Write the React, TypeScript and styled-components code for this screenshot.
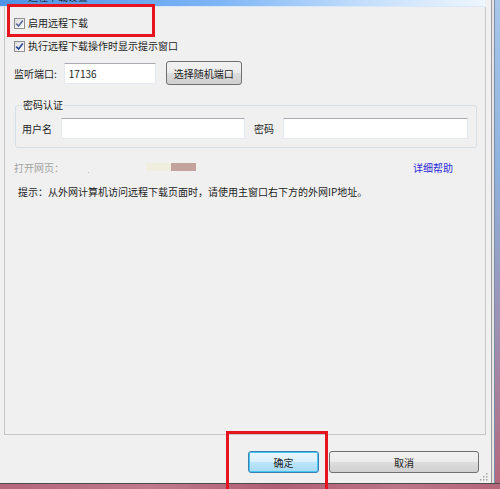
import React from 'react';
import styled, {createGlobalStyle, css} from 'styled-components';

const GlobalStyle = createGlobalStyle`
    html, body {
        margin: 0;
        padding: 0;
        background: #f0f0f0;
    }
    body {
        font-family: "Noto Sans CJK SC", "Noto Sans", sans-serif;
        font-size: 10px;
        color: #1e1e1e;
    }
`;

const Check = ({color}: {color: string}) => (
    <CheckBox>
        <svg width="9" height="9" viewBox="0 0 9 9">
            <path d="M1.2 4.6 L3.6 7 L7.8 1.6" fill="none" stroke={color} strokeWidth="1.7"/>
        </svg>
    </CheckBox>
);

export default function App() {
    return (
        <>
            <GlobalStyle/>
            <Screen>
                <Client>
                    <TitleStrip>
                        <TitleText>远程下载设置</TitleText>
                    </TitleStrip>
                    <Panel>
                        <CheckRow>
                            <Check color={"#5b6d99"}/>
                            <span>启用远程下载</span>
                        </CheckRow>
                        <CheckRow $gap={9}>
                            <Check color={"#2c4a9a"}/>
                            <span>执行远程下载操作时显示提示窗口</span>
                        </CheckRow>
                        <PortRow>
                            <span>监听端口:</span>
                            <TextInput $w={92} $ml={7} defaultValue={"17136"}/>
                            <SmallButton>选择随机端口</SmallButton>
                        </PortRow>
                        <Group>
                            <Legend>密码认证</Legend>
                            <AuthRow>
                                <span>用户名</span>
                                <TextInput $w={184} $ml={9}/>
                                <AuthLabel>密码</AuthLabel>
                                <TextInput $w={185} $ml={9} type={"password"}/>
                            </AuthRow>
                        </Group>
                        <OpenRow>
                            <Muted>打开网页：</Muted>
                            <Dot/>
                            <Patch $c={"#efeedf"} $ml={57}/>
                            <Patch $c={"#c3a39b"}/>
                            <HelpLink>详细帮助</HelpLink>
                        </OpenRow>
                        <Hint>提示：从外网计算机访问远程下载页面时，请使用主窗口右下方的外网IP地址。</Hint>
                    </Panel>
                    <ButtonRow>
                        <DialogButton $w={71} $primary>确定</DialogButton>
                        <DialogButton $w={150}>取消</DialogButton>
                    </ButtonRow>
                    <Grip>
                        <svg width="8" height="8" viewBox="0 0 8 8">
                            <rect x="6" y="0" width="1.5" height="1.5" fill="#a8a8a8"/>
                            <rect x="3" y="3" width="1.5" height="1.5" fill="#a8a8a8"/>
                            <rect x="6" y="3" width="1.5" height="1.5" fill="#a8a8a8"/>
                            <rect x="0" y="6" width="1.5" height="1.5" fill="#a8a8a8"/>
                            <rect x="3" y="6" width="1.5" height="1.5" fill="#a8a8a8"/>
                            <rect x="6" y="6" width="1.5" height="1.5" fill="#a8a8a8"/>
                        </svg>
                    </Grip>
                </Client>
                <RightFrame/>
                <BottomFrame/>
                <Marker $x={7} $y={4} $w={148} $h={33}/>
                <Marker $x={226} $y={431} $w={102} $h={64}/>
            </Screen>
        </>
    );
}

const Screen = styled.div`
    position: relative;
    width: 500px;
    height: 489px;
    overflow: hidden;
    display: grid;
    grid-template-columns: 491px 9px;
    grid-template-rows: 483px 6px;
    background: #f0f0f0;
`;

const Client = styled.div`
    position: relative;
    display: flex;
    flex-direction: column;
    min-height: 0;
`;

const TitleStrip = styled.div`
    height: 7px;
    margin-right: 6px;
    flex-shrink: 0;
    box-sizing: border-box;
    padding-left: 28px;
    overflow: hidden;
    background: linear-gradient(to right, #4f93e6 0%, #7eb5f6 45%, #c3defb 75%, #eef6ff 100%);
    border-bottom: 1px solid #d9e8f8;
`;

const TitleText = styled.span`
    display: block;
    margin-top: -9px;
    line-height: 12px;
    color: #2a2f3a;
`;

const Panel = styled.div`
    margin-left: 4px;
    width: 482px;
    height: 428px;
    flex-shrink: 0;
    box-sizing: border-box;
    border: 1px solid #c6c6c6;
    border-top: none;
    padding: 9px 8px 0 9px;
    display: flex;
    flex-direction: column;
`;

const CheckRow = styled.div<{$gap?: number}>`
    display: flex;
    align-items: center;
    gap: 3px;
    height: 14px;
    line-height: 14px;
    margin-top: ${p => p.$gap ?? 0}px;
`;

const CheckBox = styled.span`
    width: 11px;
    height: 11px;
    box-sizing: border-box;
    border: 1px solid #8e8f8f;
    background: linear-gradient(135deg, #dcdcdc, #ffffff);
    display: flex;
    align-items: center;
    justify-content: center;
    flex-shrink: 0;
`;

const PortRow = styled.div`
    display: flex;
    align-items: center;
    height: 24px;
    margin-top: 8px;
`;

const TextInput = styled.input<{$w: number; $ml: number}>`
    width: ${p => p.$w}px;
    height: 21px;
    margin: 0 0 0 ${p => p.$ml}px;
    box-sizing: border-box;
    padding: 0 4px;
    border: 1px solid #e3e9ef;
    border-top-color: #abadb3;
    background: #ffffff;
    font: inherit;
    font-size: 10px;
    color: #1e1e1e;
    outline: none;
`;

const winButton = css`
    box-sizing: border-box;
    height: 22px;
    border-radius: 3px;
    font: inherit;
    font-size: 10px;
    color: #1e1e1e;
    padding: 0;
    cursor: default;
`;

const SmallButton = styled.button`
    ${winButton};
    width: 76px;
    height: 24px;
    margin-left: 10px;
    border: 1px solid #707070;
    background: linear-gradient(to bottom, #f2f2f2 0%, #ebebeb 50%, #dddddd 51%, #cfcfcf 100%);
`;

const Group = styled.fieldset`
    margin: 13px 0 0 1px;
    padding: 0 8px 8px 6px;
    border: 1px solid #d5dfe5;
    border-radius: 3px;
`;

const Legend = styled.legend`
    padding: 0 1px;
    line-height: 14px;
`;

const AuthRow = styled.div`
    display: flex;
    align-items: center;
    height: 21px;
    margin-top: 6px;
`;

const AuthLabel = styled.span`
    margin-left: 9px;
`;

const OpenRow = styled.div`
    display: flex;
    align-items: center;
    height: 14px;
    line-height: 14px;
    margin-top: 13px;
`;

const Muted = styled.span`
    color: #a4a4a4;
`;

const Dot = styled.span`
    width: 1px;
    height: 1px;
    margin: 8px 0 0 24px;
    background: #c4c4c4;
`;

const Patch = styled.span<{$c: string; $ml?: number}>`
    width: 25px;
    height: 8px;
    margin: -2px 0 0 ${p => p.$ml ?? 0}px;
    background: ${p => p.$c};
`;

const HelpLink = styled.span`
    margin-left: auto;
    margin-right: 24px;
    color: #2b2bd8;
    cursor: pointer;
`;

const Hint = styled.div`
    margin-top: 10px;
    padding-left: 4px;
    height: 14px;
    line-height: 14px;
`;

const ButtonRow = styled.div`
    flex: 1;
    display: flex;
    justify-content: flex-end;
    align-items: flex-start;
    gap: 10px;
    padding: 16px 12px 0 0;
`;

const DialogButton = styled.button<{$w: number; $primary?: boolean}>`
    ${winButton};
    width: ${p => p.$w}px;
    border: 1px solid ${p => p.$primary ? '#3c7fb1' : '#707070'};
    background: ${p => p.$primary
        ? 'linear-gradient(to bottom, #eaf6fd 0%, #d9f0fc 50%, #bee6fd 51%, #a7d9f5 100%)'
        : 'linear-gradient(to bottom, #f2f2f2 0%, #ebebeb 50%, #dddddd 51%, #cfcfcf 100%)'};
    box-shadow: ${p => p.$primary ? 'inset 0 0 0 1px #48c6f2' : 'none'};
`;

const Grip = styled.div`
    position: absolute;
    right: 3px;
    bottom: 2px;
    width: 8px;
    height: 8px;
    line-height: 0;
`;

const RightFrame = styled.div`
    background:
        linear-gradient(to right, #9a9a9a 0 1px, #e6e6e6 1px 3px, #7d8fa8 3px 4px, transparent 4px),
        linear-gradient(to bottom, #a9c6ea 0%, #8fb2de 35%, #9d8fb0 70%, #b4687d 100%);
`;

const BottomFrame = styled.div`
    grid-column: 1 / -1;
    border-top: 1px solid #4c4c4c;
    background: linear-gradient(to right, #b4667a 0%, #c07a8c 30%, #b05f74 55%, #bd7588 80%, #b4667a 100%);
`;

const Marker = styled.div<{$x: number; $y: number; $w: number; $h: number}>`
    position: absolute;
    left: ${p => p.$x}px;
    top: ${p => p.$y}px;
    width: ${p => p.$w}px;
    height: ${p => p.$h}px;
    box-sizing: border-box;
    border: 3px solid #e5141f;
    pointer-events: none;
`;
